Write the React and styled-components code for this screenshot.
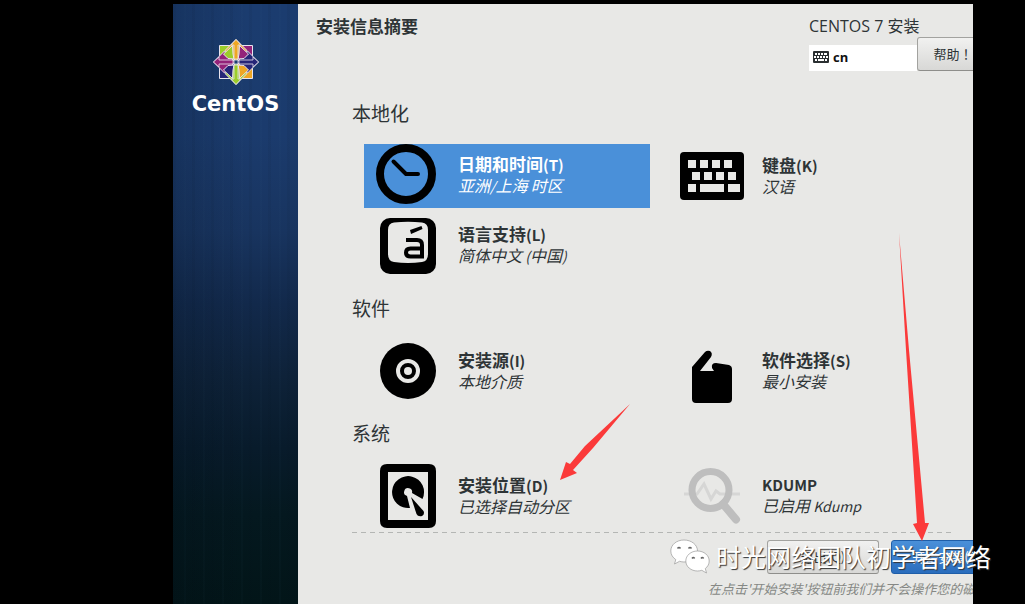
import React from "react";
import styled, { createGlobalStyle, css } from "styled-components";

const GlobalStyle = createGlobalStyle`
  * { box-sizing: border-box; }
  body { margin: 0; background: #000; }
  button { font: inherit; color: inherit; }
`;

const Page = styled.div`
  position: relative;
  min-height: 100vh;
  padding: 4px 52px 0 173px;
  display: flex;
  overflow: hidden;
  background: #000;
  color: #2e3436;
  font-family: "Noto Sans CJK SC", "Open Sans", sans-serif;
`;

const Sidebar = styled.aside`
  flex: 0 0 125px;
  padding-top: 34px;
  display: flex;
  flex-direction: column;
  align-items: center;
  background:
    linear-gradient(90deg, rgba(0, 10, 20, 0.16), rgba(0, 10, 20, 0) 60%),
    repeating-linear-gradient(90deg, rgba(0, 12, 22, 0.05) 0 3px, transparent 3px 11px, rgba(70, 120, 150, 0.03) 11px 13px, transparent 13px 19px),
    linear-gradient(180deg, #1b3c6f 0%, #1b3b6d 22%, #18345f 38%, #12294b 50%, #0e2239 62%, #081b2b 74%, #04181f 85%, #021518 100%);
`;

const Wordmark = styled.div`
  margin-top: 4px;
  font: bold 21px/28px "DejaVu Sans", sans-serif;
  color: #fff;
`;

const Main = styled.main`
  flex: 1;
  min-width: 0;
  overflow: hidden;
  background: #e8e8e6;
`;

const Header = styled.header`
  height: 79px;
  margin-right: -16px;
  padding: 11px 0 0 18px;
  display: flex;
  justify-content: space-between;
`;

const Title = styled.h1`
  margin: 0;
  font-size: 17px;
  line-height: 21px;
  font-weight: 700;
`;

const HeaderSide = styled.div`
  flex: none;
  font-family: "Open Sans", "Noto Sans CJK SC", sans-serif;
`;

const Product = styled.div`
  font-size: 16px;
  line-height: 22px;
  white-space: nowrap;
`;

const HeaderControls = styled.div`
  display: flex;
  align-items: flex-start;
`;

const LayoutButton = styled.button`
  width: 108px;
  height: 26px;
  margin-top: 8px;
  padding: 0 4px 2px;
  display: flex;
  align-items: center;
  gap: 4px;
  border: 0;
  background: #fff;
  color: #111;
  font-size: 13px;
  font-weight: 700;
`;

const Button = styled.button`
  width: ${(p) => p.$width}px;
  height: 34px;
  padding: 0 0 2px;
  border: 1px solid #a2a29f;
  border-bottom-color: #8e8e8b;
  border-radius: 3px;
  background: linear-gradient(#f1f1f0, #d8d8d6);
  font-family: "Noto Sans CJK SC", sans-serif;
  font-size: 13px;
  white-space: nowrap;
  ${(p) =>
    p.$primary &&
    css`
      border-color: #1f5ea8;
      background: linear-gradient(#4a90d9, #2a6dbd);
      color: #fff;
    `}
`;

const CenteredMark = styled.span`
  font-family: "Noto Sans CJK TC", sans-serif;
`;

const Sections = styled.div`
  padding-left: 54px;
`;

const SectionTitle = styled.h2`
  margin: 0;
  padding: 18px 0 19px;
  font-size: 19px;
  line-height: 24px;
  font-weight: 400;
`;

const Spokes = styled.div`
  padding-left: 12px;
  display: grid;
  grid-template-columns: minmax(0, 286px) minmax(0, 286px);
  gap: 6px 18px;
`;

const Spoke = styled.button`
  height: 64px;
  padding: 0 0 0 12px;
  display: flex;
  align-items: center;
  gap: 18px;
  border: 0;
  text-align: left;
  white-space: nowrap;
  background: ${(p) => (p.$selected ? "#4a90d9" : "transparent")};
  color: ${(p) => (p.$selected ? "#fff" : "#2e3436")};
`;

const SpokeText = styled.span`
  padding-bottom: 2px;
  display: flex;
  flex-direction: column;
`;

const SpokeName = styled.strong`
  font-size: 17px;
  line-height: 21px;
`;

const SpokeStatus = styled.em`
  font-size: 16px;
  line-height: 21px;
`;

const Latin = styled.span`
  font-size: ${(p) => p.$size}px;
`;

const Footer = styled.footer`
  margin: 4px 20px 0 54px;
  padding-top: 8px;
  background: repeating-linear-gradient(90deg, #b4b6b4 0 5px, transparent 5px 9px) top / 100% 1px no-repeat;
`;

const Actions = styled.div`
  margin-right: -50px;
  display: flex;
  justify-content: flex-end;
  gap: 12px;
`;

const Note = styled.p`
  margin: 5px -80px 0 356px;
  font-size: 13px;
  line-height: 20px;
  font-style: italic;
  color: #868885;
  white-space: nowrap;
`;

const Arrows = styled.svg`
  position: absolute;
  left: 556px;
  top: 228px;
  pointer-events: none;
`;

const Watermark = styled.div`
  position: absolute;
  right: 34px;
  top: 537px;
  display: flex;
  align-items: center;
  gap: 6px;
  font-size: 25px;
  line-height: 38px;
  color: #fff;
  white-space: nowrap;
  text-shadow: 1px 1px 1px #333;
  pointer-events: none;
`;

const Logo = () => (
  <svg width="48" height="48" viewBox="-24 -24 48 48" aria-hidden="true">
    <g stroke="#e9e4ee" strokeWidth="1">
      <path d="M-16.500-16.500H0V0H-16.500z" fill="#9ccd2a" />
      <path d="M0-16.500H16.500V0H0z" fill="#932279" />
      <path d="M0 0H16.500V16.500H0z" fill="#efa724" />
      <path d="M-16.500 0H0V16.500H-16.500z" fill="#262577" />
      <path d="M0-22.500 11-11.500 0-1-11-11.500z" fill="#efa724" />
      <path d="M22.500 0 11.500 11 1 0 11.500-11z" fill="#262577" />
      <path d="M0 22.500 11 11.500 0 1-11 11.500z" fill="#9ccd2a" />
      <path d="M-22.500 0-11.500 11-1 0-11.500-11z" fill="#932279" />
      <path d="M-3.500-16.500-12.500-8-8-3.500-2-3-3-8z" fill="#9ccd2a" />
      <path d="M3.500-16.500 12.500-8 8-3.500 2-3 3-8z" fill="#932279" />
      <path d="M3.500 16.500 12.500 8 8 3.500 2 3 3 8z" fill="#efa724" />
      <path d="M-3.500 16.500-12.500 8-8 3.500-2 3-3 8z" fill="#262577" />
      <path d="M0-22.500 5-17H2V-3H-2V-17H-5z" fill="#efa724" strokeWidth=".8" />
      <path d="M22.500 0 17 5V2H3V-2H17V-5z" fill="#262577" strokeWidth=".8" />
      <path d="M0 22.500 5 17H2V3H-2V17H-5z" fill="#9ccd2a" strokeWidth=".8" />
      <path d="M-22.500 0-17 5V2H-3V-2H-17V-5z" fill="#932279" strokeWidth=".8" />
    </g>
    <path d="M-2-2H2V2H-2z" fill="#1c3e72" stroke="#e9e4ee" strokeWidth=".8" />
  </svg>
);

const SpokeIcon = ({ children }) => (
  <svg width="64" height="64" viewBox="0 0 64 64" fill="#000" aria-hidden="true">
    {children}
  </svg>
);

const ClockIcon = () => (
  <SpokeIcon>
    <circle cx="30" cy="30" r="26" fill="none" stroke="#000" strokeWidth="8" />
    <path d="M17.500 17.500 30 30H42" fill="none" stroke="#000" strokeWidth="4" strokeLinecap="round" strokeLinejoin="round" />
  </SpokeIcon>
);

const KeyboardIcon = () => (
  <SpokeIcon>
    <rect y="8" width="64" height="48" rx="4" />
    <path
      fill="#e8e8e6"
      d="M8 16h8v8H8zM20 16h8v8h-8zM32 16h8v8h-8zM44 16h8v8h-8zM12 28h8v8h-8zM24 28h8v8h-8zM36 28h8v8h-8zM48 28h8v8h-8zM8 40h8v8H8zM20 40h24v8H20zM48 40h12v8H48z"
    />
  </SpokeIcon>
);

const LanguageIcon = () => (
  <SpokeIcon>
    <rect x="4" y="4" width="56" height="56" rx="10" />
    <path fill="#e8e8e6" d="M18 8.500Q32 7 46 8.500Q52 9 52 16V40Q52 47 46 48Q32 50 18 48Q12 47 12 40V16Q12 9 18 8.500z" />
    <path d="M34 16 45.500 12 46.500 15 35 20z" />
    <path d="M30 26H41Q46 26 46 31V42.500H34.500Q30 42.500 30 38.500Q30 34.500 34.500 34.500H46" fill="none" stroke="#000" strokeWidth="4" />
  </SpokeIcon>
);

const DiscIcon = () => (
  <SpokeIcon>
    <circle cx="32" cy="32" r="28" />
    <circle cx="32" cy="32" r="10" fill="none" stroke="#e8e8e6" strokeWidth="4" />
    <circle cx="32" cy="32" r="4" fill="#e8e8e6" />
  </SpokeIcon>
);

const PackageIcon = () => (
  <SpokeIcon>
    <path d="M12 28 25 13Q27 11 30 12Q33 14 31 18L20 32H34L32 29Q31 24 36 24L49 26Q52 27 52 30V60Q52 64 48 64H16Q12 64 12 60z" />
  </SpokeIcon>
);

const DiskIcon = () => (
  <SpokeIcon>
    <path fillRule="evenodd" d="M11 0H53Q60 0 60 7V57Q60 64 53 64H11Q4 64 4 57V7Q4 0 11 0zM12 8V56H52V8z" />
    <path d="M34 44A16 16 0 1 1 46.500 35L36 29A4 4 0 1 0 31 32z" />
    <path d="M35 33 47.500 47Q49 50 46 52Q42 53 40.500 50z" />
  </SpokeIcon>
);

const KdumpIcon = () => (
  <SpokeIcon>
    <path d="M4 30H17L24 20 31 35 36 27 40 30H60" fill="none" stroke="#d6d6d5" strokeWidth="3" />
    <circle cx="30.500" cy="26" r="18.500" fill="none" stroke="#bebebe" strokeWidth="7" />
    <path d="M43 40 56 55.500" stroke="#bebebe" strokeWidth="8" strokeLinecap="round" />
  </SpokeIcon>
);

const SmallKeyboard = () => (
  <svg width="16" height="12" viewBox="0 0 16 12" aria-hidden="true">
    <rect width="16" height="12" rx="1" fill="#2a2f31" />
    <path d="M2 2h2v2H2zM5 2h2v2H5zM8 2h2v2H8zM11 2h3v2h-3zM1 5h2v2H1zM4 5h2v2H4zM7 5h2v2H7zM10 5h2v2h-2zM13 5h2v2h-2zM2 8h2v2H2zM5 8h6v2H5zM12 8h2v2h-2z" fill="#fff" />
  </svg>
);

const ChatBubbles = () => (
  <svg width="40" height="36" viewBox="0 0 40 36" aria-hidden="true">
    <g fill="#fff" stroke="#999" strokeWidth=".7">
      <path d="M14 2C6.500 2 .8 6.800 .8 13C.8 16.600 2.800 19.700 5.800 21.600L4.500 26 9.500 23.300Q12 24 14 24C21.500 24 27.500 19.200 27.500 13S21.500 2 14 2z" />
      <path d="M27.500 13C21 13 15.800 17.400 15.800 23S21 33 27.500 33Q29.800 33 31.800 32.300L36.500 35 35.300 30.500C37.800 28.700 39.200 26 39.200 23C39.200 17.400 34 13 27.500 13z" />
    </g>
    <path d="M7.500 10.500q1.500-2 3 0M18.500 10.500q1.500-2 3 0M22 20.500q1.300-2 2.600 0M31 20.500q1.300-2 2.600 0" fill="none" stroke="#666" strokeWidth="1.500" />
  </svg>
);

const SECTIONS = [
  {
    title: "本地化",
    items: [
      { name: "日期和时间(T)", status: "亚洲/上海 时区", Icon: ClockIcon, selected: true },
      { name: "键盘(K)", status: "汉语", Icon: KeyboardIcon },
      { name: "语言支持(L)", status: "简体中文 (中国)", Icon: LanguageIcon },
    ],
  },
  {
    title: "软件",
    items: [
      { name: "安装源(I)", status: "本地介质", Icon: DiscIcon },
      { name: "软件选择(S)", status: "最小安装", Icon: PackageIcon },
    ],
  },
  {
    title: "系统",
    items: [
      { name: "安装位置(D)", status: "已选择自动分区", Icon: DiskIcon },
      { name: "KDUMP", status: "已启用 Kdump", Icon: KdumpIcon },
    ],
  },
];

// Latin runs are set a little smaller than the Chinese text around them.
const mixed = (text, size) =>
  text.split(/([\x20-\x7e]+)/).map((run, i) =>
    i % 2 ? <Latin key={i} $size={size}>{run}</Latin> : run
  );

export default function App() {
  return (
    <Page>
      <GlobalStyle />
      <Sidebar>
        <Logo />
        <Wordmark>CentOS</Wordmark>
      </Sidebar>
      <Main>
        <Header>
          <Title>安装信息摘要</Title>
          <HeaderSide>
            <Product>CENTOS 7 安装</Product>
            <HeaderControls>
              <LayoutButton type="button">
                <SmallKeyboard />
                cn
              </LayoutButton>
              <Button type="button" $width={72}>
                帮助<CenteredMark>！</CenteredMark>
              </Button>
            </HeaderControls>
          </HeaderSide>
        </Header>
        <Sections>
          {SECTIONS.map(({ title, items }) => (
            <section key={title}>
              <SectionTitle>{title}</SectionTitle>
              <Spokes>
                {items.map(({ name, status, Icon, selected }) => (
                  <Spoke key={name} type="button" $selected={selected}>
                    <Icon />
                    <SpokeText>
                      <SpokeName>{mixed(name, 15)}</SpokeName>
                      <SpokeStatus>{mixed(status, 14)}</SpokeStatus>
                    </SpokeText>
                  </Spoke>
                ))}
              </Spokes>
            </section>
          ))}
        </Sections>
        <Footer>
          <Actions>
            <Button type="button" $width={112}>退出(Q)</Button>
            <Button type="button" $width={112} $primary>开始安装(B)</Button>
          </Actions>
          <Note>在点击'开始安装'按钮前我们并不会操作您的磁盘。</Note>
        </Footer>
      </Main>
      <Arrows width="380" height="316" viewBox="556 228 380 316" fill="#fb3a3a" aria-hidden="true">
        <path d="M630 404 593 448 573 470 577 473 560 480 566 462 570 464 585 446z" />
        <path d="M899 233 909 350 925 523 929 523 922 541 913 524 917 523 906 350z" />
      </Arrows>
      <Watermark>
        <ChatBubbles />
        时光网络团队初学者网络
      </Watermark>
    </Page>
  );
}
